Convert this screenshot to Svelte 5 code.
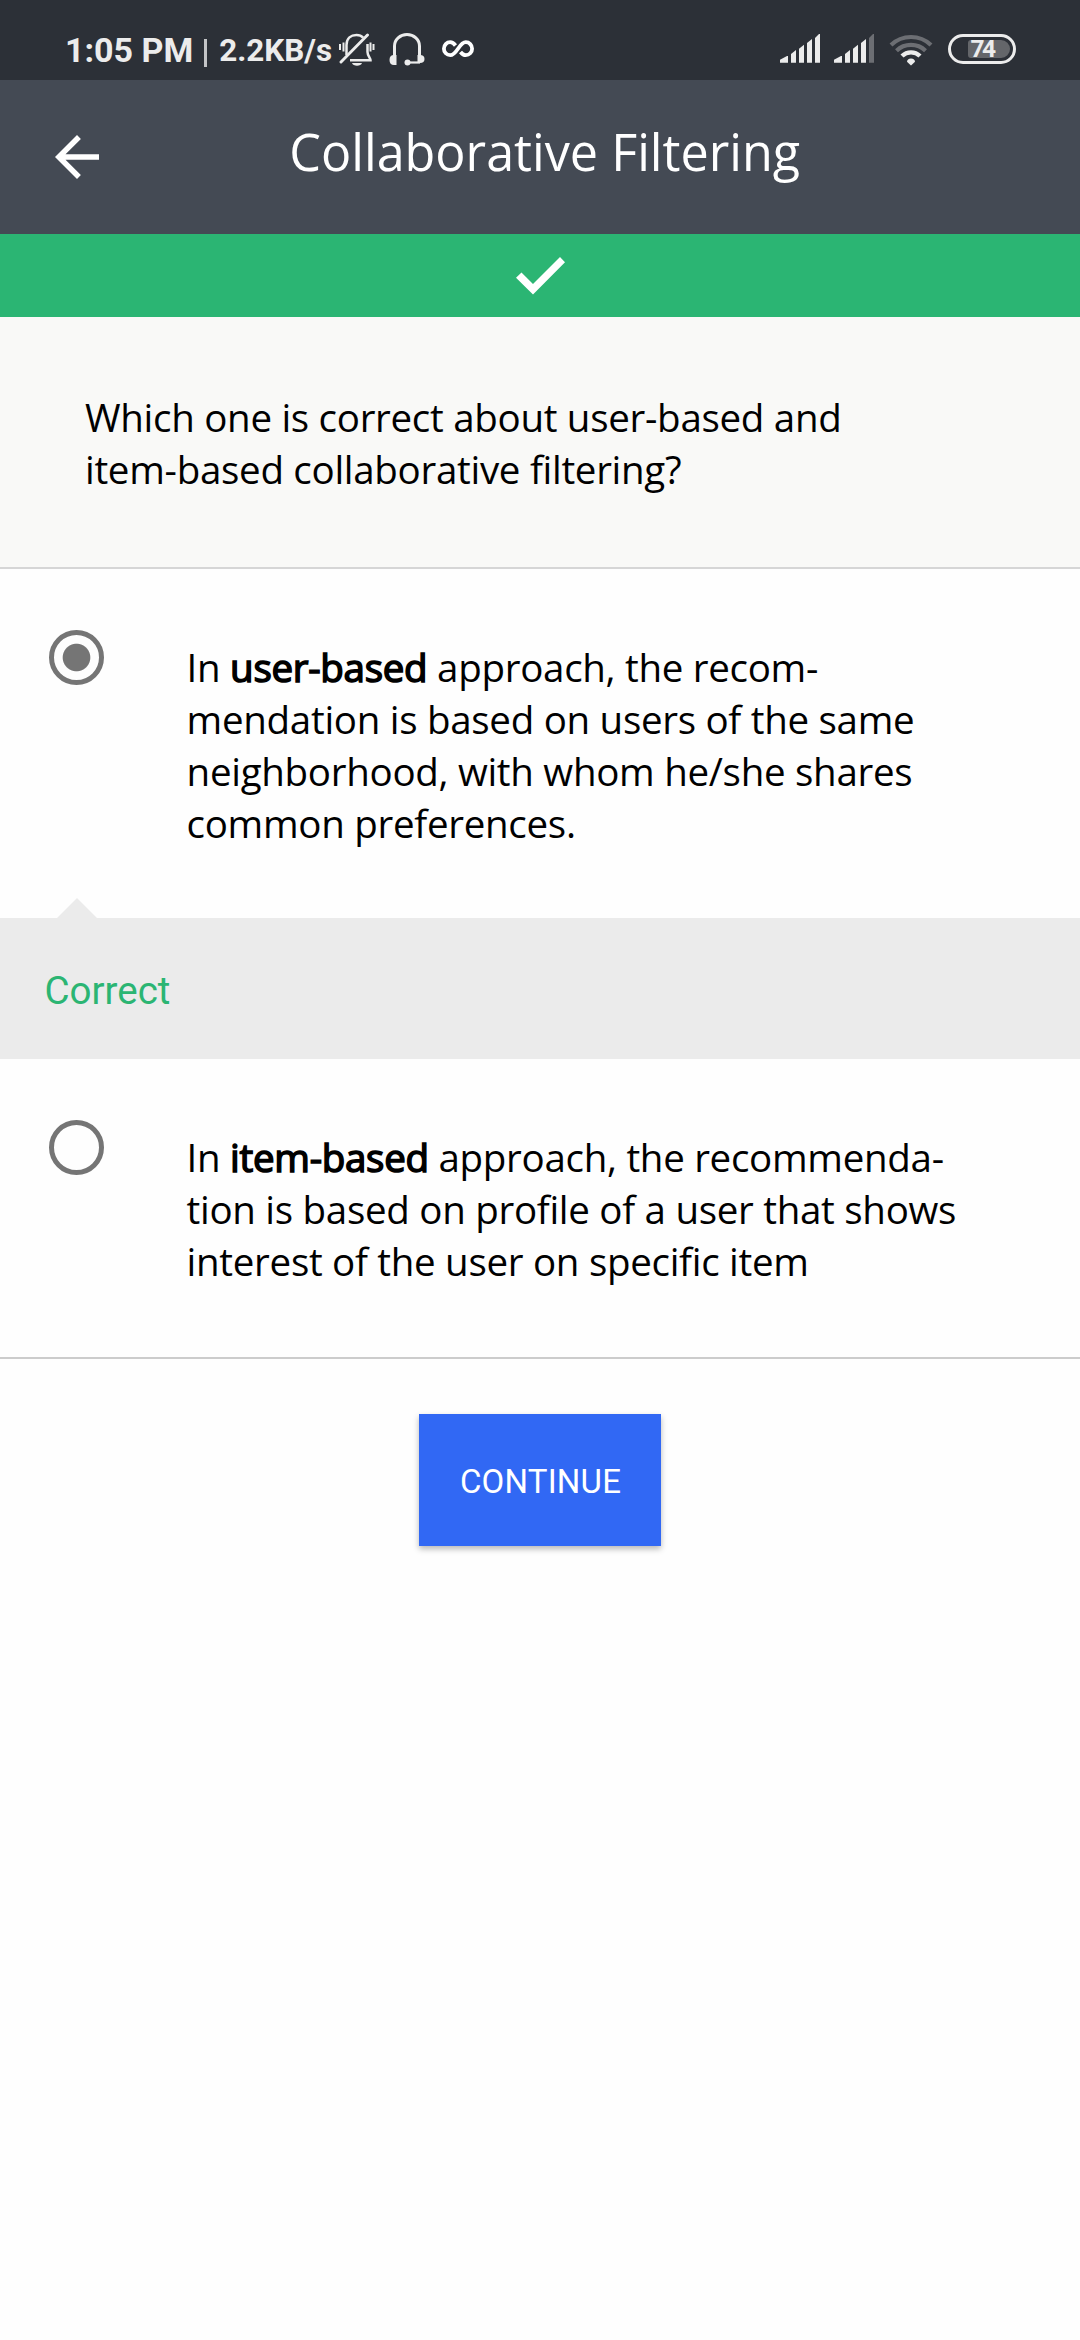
<script>
  const question = ['Which one is correct about user-based and', 'item-based collaborative filtering?'];
  const first = [
    'mendation is based on users of the same',
    'neighborhood, with whom he/she shares',
    'common preferences.'
  ];
  const second = ['tion is based on profile of a user that shows', 'interest of the user on specific item'];
  const bars = [
    'M0 28.7v-3L7 22h1v6.7z',
    'M11 28.7V20l5-4v12.7z',
    'M19 28.7v-14l5-4v18z',
    'M27 28.7V9l5-4v23.7z',
    'M35 28.7V4l4-4h1v28.7z'
  ];
</script>

{#snippet signal(weak)}
  <svg class="signal" width="40" height="30" viewBox="0 0 40 30">
    {#each bars as d, i}
      <path {d} fill={weak && i === 4 ? '#6c6e73' : '#ececec'} />
    {/each}
  </svg>
{/snippet}

<div class="screen">
  <div class="status">
    <span class="time">1:05 PM</span>
    <span class="sep"></span>
    <span class="speed">2.2KB/s</span>
    <svg class="bell" width="36" height="34" viewBox="0 0 36 34" fill="none" stroke="#ececec">
      <path d="M7.5 22V12C7.5 5 12 2 17.500 2c3 0 5 .8 6.600 2.600M28.500 11v8c0 3.500 3 6 3 8.200H11" stroke-width="2.500" />
      <path d="M2 29 28.500 2" stroke-width="2.900" stroke-linecap="round" />
      <path d="M1 11v6M4.500 9.500v9M31.500 9.500v9M34.500 11v6" stroke-width="2" />
      <path d="M13 30h10c-1 3.500-9 3.500-10 0z" fill="#ececec" stroke="none" />
    </svg>
    <svg class="phones" width="36" height="34" viewBox="0 0 36 34" fill="none" stroke="#ececec">
      <path d="M5.500 24V13a12.500 11.500 0 0 1 25 0v11" stroke-width="3" />
      <path d="M7.500 22v10H5q-4.500 0-4.500-5t4.500-5zM28.500 22v8H31q4.500 0 4.500-4t-4.500-4z" fill="#ececec" stroke="none" />
      <path d="M18 29.500h13" stroke-width="2.200" />
      <circle cx="18.500" cy="29.500" r="3" fill="#ececec" stroke="none" />
    </svg>
    <svg class="inf" width="32" height="18" viewBox="0 0 32 18" fill="none" stroke="#fff" stroke-width="3.800">
      <path d="M13.500 5.500C11.800 3.200 10.200 2.200 8.200 2.200a6.300 6.500 0 0 0 0 13c6.800 0 8.800-13 15.600-13a6.300 6.500 0 0 1 0 13c-2.200 0-3.600-1-5.300-3.200" />
    </svg>
    <div class="right">
      {@render signal(false)}
      {@render signal(true)}
      <svg class="wifi" width="44" height="32" viewBox="0 0 44 32" fill="none">
        <path d="M2 11a29 29 0 0 1 40 0M7.500 16.700a21 21 0 0 1 29 0" stroke="#6c6e73" stroke-width="4.200" />
        <path d="M13 22a13 13 0 0 1 18 0" stroke="#ececec" stroke-width="4.400" />
        <path d="M22 24.500c2.500 0 4 1.500 4 3.200L22 31.500 18 27.700c0-1.700 1.500-3.200 4-3.200z" fill="#ececec" />
      </svg>
      <div class="battery"><span class="level">74</span></div>
    </div>
  </div>

  <header>
    <svg class="back" width="66" height="66" viewBox="0 0 24 24"><path fill="#fff" d="M20 11H7.830l5.590-5.590L12 4l-8 8 8 8 1.410-1.410L7.830 13H20z" /></svg>
    <h1>Collaborative Filtering</h1>
  </header>

  <div class="banner">
    <svg width="49" height="38" viewBox="0 0 49 38"><path fill="#fff" d="M0 20.800 5.500 15.600 17 27 44 0l5 5.200L17 37.500z" /></svg>
  </div>

  <section class="question">
    {#each question as line}<p>{line}</p>{/each}
  </section>

  <section class="option first">
    <span class="radio on"></span>
    <div>
      <p>In <b>user-based</b> approach, the recom-</p>
      {#each first as line}<p>{line}</p>{/each}
    </div>
  </section>

  <section class="feedback">Correct</section>

  <section class="option second">
    <span class="radio"></span>
    <div>
      <p>In <b>item-based</b> approach, the recommenda-</p>
      {#each second as line}<p>{line}</p>{/each}
    </div>
  </section>

  <button>CONTINUE</button>
</div>

<style>
  :global(body) { margin: 0; background: #fefefe; }
  .screen { width: 1080px; height: 2340px; overflow: hidden; background: #fefefe; font-family: 'Open Sans', sans-serif; color: #000; display: flex; flex-direction: column; }
  svg { display: block; flex: none; }
  .status { height: 80px; flex: none; background: #2c3037; color: #ececec; display: flex; align-items: flex-start; font-family: Roboto, sans-serif; font-weight: 700; padding: 0 64px 0 65px; box-sizing: border-box; white-space: nowrap; }
  .time { font-size: 34px; line-height: 40px; margin-top: 30px; }
  .sep { width: 3px; height: 28px; background: #c4c5c7; margin: 39px 12px 0 11px; }
  .speed { font-size: 31.4px; line-height: 36px; margin-top: 33px; }
  .bell { margin: 33px 0 0 7px; }
  .phones { margin: 33px 0 0 14px; }
  .inf { margin: 40px 0 0 17px; }
  .right { margin-left: auto; display: flex; align-items: flex-start; }
  .signal { margin: 34px 14px 0 0; }
  .wifi { margin: 34px 15px 0 1px; }
  .battery { margin-top: 34px; width: 68px; height: 30px; border: 3px solid #ececec; border-radius: 15px; box-sizing: border-box; padding: 3px 3px 3px 17px; }
  .level { display: block; height: 18px; background: #64666a; border-radius: 3px 9px 9px 3px; font-size: 24.5px; line-height: 18px; padding-left: 2.500px; letter-spacing: -2.5px; }
  header { height: 154px; flex: none; background: #444a54; display: flex; align-items: flex-start; }
  .back { margin: 44px 0 0 44px; }
  h1 { margin: 37.500px 0 0 179.3px; font-size: 50.3px; line-height: 68px; font-weight: 400; color: #fff; white-space: nowrap; }
  .banner { height: 83px; flex: none; background: #2bb573; display: flex; justify-content: center; padding-top: 23px; box-sizing: border-box; }
  .question { height: 252px; flex: none; box-sizing: border-box; background: #f9f9f7; border-bottom: 2px solid #d6d6d6; padding: 74px 0 0 85px; }
  p { margin: 0; font-size: 38.5px; line-height: 52px; white-space: nowrap; letter-spacing: -0.29px; }
  b { font-weight: 400; -webkit-text-stroke: 1.5px #000; }
  .option { flex: none; display: flex; align-items: flex-start; box-sizing: border-box; }
  .first { height: 349px; }
  .second { height: 300px; border-bottom: 2px solid #ccc; }
  .option div { padding: 72px 0 0 82.6px; }
  .radio { flex: none; width: 55px; height: 55px; box-sizing: border-box; border: 5.5px solid #757575; border-radius: 50%; margin: 61px 0 0 49px; }
  .on { background: radial-gradient(circle, #757575 13.3px, transparent 14.3px); }
  .feedback { position: relative; height: 141px; flex: none; background: #ebebeb; color: #2bb573; font: 38.5px/46px Roboto, sans-serif; padding: 50px 0 0 44.5px; box-sizing: border-box; }
  .feedback::before { content: ''; position: absolute; left: 57px; top: -20px; border: 20px solid transparent; border-top: 0; border-bottom-color: #ebebeb; }
  button { flex: none; align-self: center; margin-top: 55px; width: 242px; height: 132px; border: 0; background: #3168f4; color: #fff; font: 33px/40px Roboto, sans-serif; letter-spacing: 0.2px; box-shadow: 0 3px 6px rgba(0,0,0,.28); padding: 3px 0 0 1px; }
</style>
